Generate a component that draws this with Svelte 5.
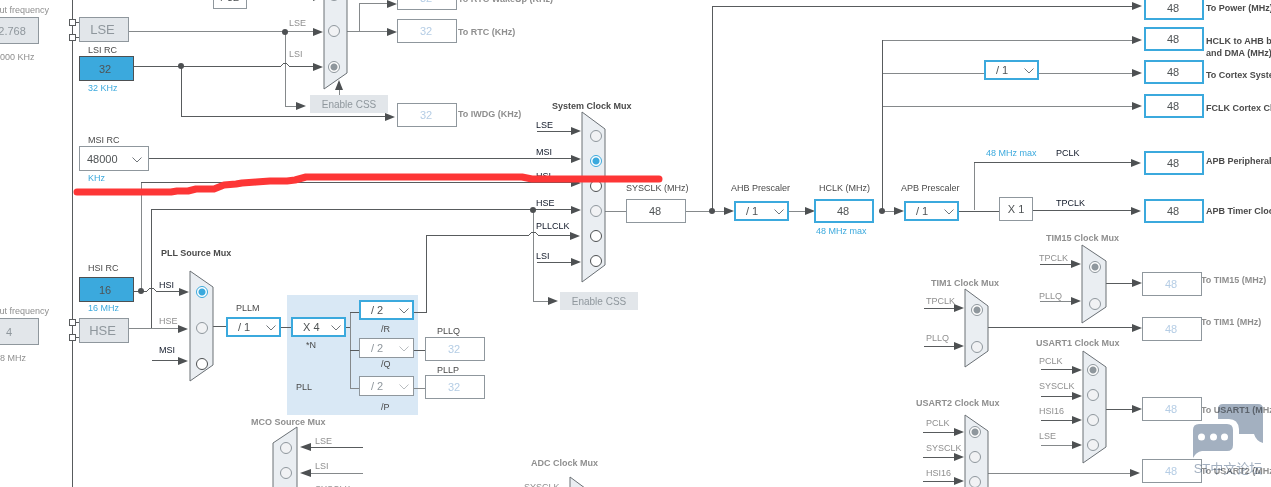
<script>
  const at = (x, y) => `left:${x}px;top:${y}px`;

  // Wire paths of the clock tree
  const wires = [
    'M72 -1V600',
    'M76 22H79M76 37H79M76 322H79M76 337H79',
    'M134 66H281Q285 60 289 66H315',
    'M181 66V116H387',
    'M149 158H573',
    'M134 291H147Q151 285 156 291H181',
    'M151 328V209H573',
    'M152 360H181',
    'M141 182H573',
    'M414 312H426V235H529Q533 229 538 235H573',
    'M537 131H573M537 262H573',
    'M712 211V6H1134',
    'M882 211V40',
    'M974 162H1134',
    'M959 211H999M1033 210H1134',
    'M213 326H226M281 327H291M346 327H350M350 312H359M350 350H359M414 350H425',
    'M303 447H363',
    'M924 308H957M924 346H957',
    'M988 327H1134',
    'M1040 264H1074M1106 283H1134',
    'M1041 369H1074M1041 396H1074M1041 420H1074M1106 409H1134',
    'M923 432H957M923 457H957M923 481H957'
  ];
  const softWires = [
    'M129 31H315M285 32V106H299',
    'M347 31H389M359 31V3H389',
    'M339 95V88',
    'M141 291V182',
    'M129 328H181',
    'M533 209V301H550',
    'M605 211H626M686 211H726M789 211H806M882 211H896',
    'M882 40H1134M882 73H984M1039 73H1134M882 106H1134',
    'M974 210V162',
    'M350 312V388H359M414 388H425',
    'M303 473H363',
    'M1040 301H1074M1041 445H1074',
    'M988 473H1134'
  ];
  const arrows = [
    [323, -3], [323, 32], [323, 67], [306, 106], [395, 117], [397, 32], [397, 4],
    [581, 131], [581, 159], [581, 183], [581, 210], [580, 236], [581, 262], [558, 301],
    [734, 211], [815, 211], [904, 211],
    [1142, 6], [1142, 40], [1142, 73], [1142, 106], [1141, 163], [1141, 211],
    [189, 292], [188, 329], [188, 361],
    [964, 308], [964, 346], [1081, 264], [1081, 301], [1142, 283], [1142, 328],
    [1082, 370], [1082, 396], [1082, 420], [1082, 445], [1142, 409],
    [964, 432], [964, 457], [964, 481], [1140, 473]
  ];
  const dots = [[285, 32], [181, 66], [141, 291], [533, 210], [712, 211], [882, 211]];
  const muxShapes = [
    '324,-20 347,-4 347,73 324,89',
    '582,112 605,129 605,265 582,282',
    '190,271 213,287 213,365 190,381',
    '965,289 988,306 988,351 965,367',
    '1082,245 1106,261 1106,307 1082,323',
    '1083,351 1106,367 1106,447 1083,463',
    '965,415 988,431 988,510 965,526',
    '297,427 273,443 273,520 297,536',
    '570,477 593,494 593,540 570,556'
  ];
  const pins = [[69, 19], [69, 34], [69, 319], [69, 334]];

  const muxes = [
    { name: 'RTC Clock Mux', x: 334, items: [['HSE_RTC', -5, 'off'], ['LSE', 31, 'off'], ['LSI', 67, 'off', true]] },
    { name: 'System Clock Mux', x: 596, items: [['LSE', 136, 'off'], ['MSI', 161, 'on', true], ['HSI', 186, 'on'], ['HSE', 211, 'off'], ['PLLCLK', 236, 'on'], ['LSI', 261, 'on']] },
    { name: 'PLL Source Mux', x: 202, items: [['HSI', 292, 'on', true], ['HSE', 328, 'off'], ['MSI', 364, 'on']] },
    { name: 'TIM1 Clock Mux', x: 977, items: [['TPCLK', 310, 'off', true], ['PLLQ', 347, 'off']] },
    { name: 'TIM15 Clock Mux', x: 1095, items: [['TPCLK', 267, 'off', true], ['PLLQ', 304, 'off']] },
    { name: 'USART1 Clock Mux', x: 1093, items: [['PCLK', 370, 'off', true], ['SYSCLK', 395, 'off'], ['HSI16', 420, 'off'], ['LSE', 445, 'off']] },
    { name: 'USART2 Clock Mux', x: 975, items: [['PCLK', 432, 'off', true], ['SYSCLK', 457, 'off'], ['HSI16', 482, 'off']] },
    { name: 'MCO Source Mux', x: 286, items: [['LSE', 448, 'off'], ['LSI', 473, 'off']] }
  ];

  const fields = [
    [-21, 17, 'source', '32.768', 'LSE input frequency'],
    [-21, 318, 'source', '4', 'HSE input frequency'],
    [397, -14, 'off', '32', 'To RTC WakeUp (KHz)'],
    [397, 19, 'off', '32', 'To RTC (KHz)'],
    [397, 103, 'off', '32', 'To IWDG (KHz)'],
    [626, 199, 'plain', '48', 'SYSCLK (MHz)'],
    [814, 199, 'live', '48', 'HCLK (MHz)'],
    [1144, -4, 'live', '48', 'To Power (MHz)'],
    [1144, 27, 'live', '48', 'HCLK to AHB bus (MHz)'],
    [1144, 60, 'live', '48', 'To Cortex System timer (MHz)'],
    [1144, 94, 'live', '48', 'FCLK Cortex clock (MHz)'],
    [1144, 151, 'live', '48', 'APB Peripheral clocks (MHz)'],
    [1144, 199, 'live', '48', 'APB Timer Clocks (MHz)'],
    [1142, 272, 'off', '48', 'To TIM15 (MHz)'],
    [1142, 317, 'off', '48', 'To TIM1 (MHz)'],
    [1142, 397, 'off', '48', 'To USART1 (MHz)'],
    [1142, 459, 'off', '48', 'To USART2 (MHz)'],
    [425, 337, 'off', '32', 'PLLQ'],
    [425, 375, 'off', '32', 'PLLP']
  ];

  const selects = [
    [79, 146, 'range', '48000', 'MSI RC'],
    [984, 60, 'live', '/ 1', 'Cortex prescaler'],
    [734, 201, 'live', '/ 1', 'AHB Prescaler'],
    [904, 201, 'live', '/ 1', 'APB Prescaler'],
    [226, 317, 'live', '/ 1', 'PLLM'],
    [291, 317, 'live', 'X 4', 'PLL multiplier N'],
    [359, 300, 'live', '/ 2', 'PLL divider R'],
    [359, 338, 'off', '/ 2', 'PLL divider Q'],
    [359, 376, 'off', '/ 2', 'PLL divider P']
  ];

  const blocks = [
    [79, 56, 'rc', '32'], [79, 277, 'rc', '16'],
    [213, -15, 'factor', '/ 32'], [999, 197, 'factor', 'X 1']
  ];
  const buttons = [
    [79, 17, 'osc', 'LSE'], [79, 318, 'osc', 'HSE'],
    [310, 95, 'css', 'Enable CSS'], [560, 292, 'css', 'Enable CSS']
  ];

  // x, vertical centre, style, text
  const labels = [
    [-13, 10, 'muted', 'Input frequency'], [-13, 57, 'muted', '0-1000 KHz'],
    [-13, 311, 'muted', 'Input frequency'], [-13, 358, 'muted', '4-48 MHz'],
    [88, 50, 'dark', 'LSI RC'], [88, 88, 'blue', '32 KHz'],
    [88, 140, 'dark', 'MSI RC'], [88, 178, 'blue', 'KHz'],
    [88, 268, 'dark', 'HSI RC'], [88, 308, 'blue', '16 MHz'],
    [289, 23, 'muted', 'LSE'], [289, 54, 'muted', 'LSI'],
    [458, -1, 'muted bold', 'To RTC WakeUp (KHz)'], [458, 32, 'muted bold', 'To RTC (KHz)'],
    [458, 114, 'muted bold', 'To IWDG (KHz)'],
    [552, 106, 'dark bold', 'System Clock Mux'],
    [536, 125, 'ink', 'LSE'], [536, 152, 'ink', 'MSI'], [536, 176, 'ink', 'HSI'],
    [536, 203, 'ink', 'HSE'], [536, 226, 'ink', 'PLLCLK'], [536, 256, 'ink', 'LSI'],
    [626, 188, 'dark', 'SYSCLK (MHz)'], [731, 188, 'dark', 'AHB Prescaler'],
    [819, 188, 'dark', 'HCLK (MHz)'], [901, 188, 'dark', 'APB Prescaler'],
    [816, 231, 'blue', '48 MHz max'], [986, 153, 'blue', '48 MHz max'],
    [1056, 153, 'ink', 'PCLK'], [1056, 203, 'ink', 'TPCLK'],
    [1206, 8, 'dark bold', 'To Power (MHz)'],
    [1206, 41, 'dark bold', 'HCLK to AHB bus, core,'], [1206, 53, 'dark bold', 'and DMA (MHz)'],
    [1206, 75, 'dark bold', 'To Cortex System timer (MHz)'],
    [1206, 108, 'dark bold', 'FCLK Cortex Clock (MHz)'],
    [1206, 161, 'dark bold', 'APB Peripheral Clocks (MHz)'],
    [1206, 211, 'dark bold', 'APB Timer Clocks (MHz)'],
    [1046, 238, 'muted bold', 'TIM15 Clock Mux'],
    [1039, 258, 'muted', 'TPCLK'], [1039, 296, 'muted', 'PLLQ'],
    [1201, 280, 'muted bold', 'To TIM15 (MHz)'], [1201, 322, 'muted bold', 'To TIM1 (MHz)'],
    [931, 283, 'muted bold', 'TIM1 Clock Mux'],
    [926, 301, 'muted', 'TPCLK'], [926, 338, 'muted', 'PLLQ'],
    [1036, 343, 'muted bold', 'USART1 Clock Mux'],
    [1039, 361, 'muted', 'PCLK'], [1039, 386, 'muted', 'SYSCLK'],
    [1039, 411, 'muted', 'HSI16'], [1039, 436, 'muted', 'LSE'],
    [1201, 410, 'muted bold', 'To USART1 (MHz)'],
    [916, 403, 'muted bold', 'USART2 Clock Mux'],
    [926, 423, 'muted', 'PCLK'], [926, 448, 'muted', 'SYSCLK'], [926, 473, 'muted', 'HSI16'],
    [1201, 471, 'muted bold', 'To USART2 (MHz)'],
    [161, 253, 'dark bold', 'PLL Source Mux'],
    [159, 285, 'ink', 'HSI'], [159, 321, 'muted', 'HSE'], [159, 350, 'ink', 'MSI'],
    [236, 308, 'dark', 'PLLM'], [306, 345, 'dark', '*N'], [296, 387, 'dark', 'PLL'],
    [381, 329, 'dark', '/R'], [381, 364, 'dark', '/Q'], [381, 407, 'dark', '/P'],
    [437, 331, 'dark', 'PLLQ'], [437, 370, 'dark', 'PLLP'],
    [251, 422, 'muted bold', 'MCO Source Mux'],
    [315, 441, 'muted', 'LSE'], [315, 466, 'muted', 'LSI'], [315, 489, 'muted', 'SYSCLK'],
    [531, 463, 'muted bold', 'ADC Clock Mux'], [524, 487, 'muted', 'SYSCLK']
  ];
</script>

<main class="canvas">
  <div class="pll" style={at(287, 295)}></div>

  <svg class="layer" aria-hidden="true">
    {#each softWires as d}<path class="wire soft" {d} />{/each}
    {#each wires as d}<path class="wire" {d} />{/each}
    {#each muxShapes as points}<polygon class="mux" {points} />{/each}
    {#each arrows as [x, y]}<path class="solid" d="M{x} {y}l-10 -4v8z" />{/each}
    <path class="solid" d="M339 80l-4 10h8zM300 447l11 -4v8zM300 473l11 -4v8z" />
    {#each dots as [x, y]}<circle class="solid" cx={x} cy={y} r="3" />{/each}
    {#each pins as [x, y]}<rect class="pin" {x} {y} width="6" height="6" />{/each}
  </svg>

  {#each labels as [x, y, kind, text]}
    <span class="label {kind}" style={at(x, y - 6)}>{text}</span>
  {/each}

  {#each blocks as [x, y, kind, text]}
    <div class="block {kind}" style={at(x, y)}>{text}</div>
  {/each}

  {#each buttons as [x, y, kind, text]}
    <button class={kind} style={at(x, y)} disabled>{text}</button>
  {/each}

  {#each fields as [x, y, kind, value, name]}
    <input class="field {kind}" style={at(x, y)} type="text" {value} aria-label={name} disabled={kind === 'off' || kind === 'source'} />
  {/each}

  {#each selects as [x, y, kind, value, name]}
    <div class="select {kind}" style={at(x, y)}>
      <select aria-label={name} disabled={kind === 'off'}><option>{value}</option></select>
      <svg viewBox="0 0 10 6" aria-hidden="true"><path d="M0.5 0.5L5 5L9.5 0.5" /></svg>
    </div>
  {/each}

  {#each muxes as mux}
    {#each mux.items as [name, y, kind, checked]}
      <input class="radio {kind}" style={at(mux.x - 6, y - 6)} type="radio" name={mux.name} value={name} aria-label="{mux.name}: {name}" checked={!!checked} disabled={kind === 'off'} />
    {/each}
  {/each}

  <div class="watermark" style={at(1192, 404)}>
    <svg viewBox="0 0 72 56" aria-hidden="true">
      <path d="M26 15V5Q26 0 31 0H66Q71 0 71 5V39Q64 37 62 30H47V25Q46 15 37 15Z" />
      <path fill-rule="evenodd" d="M1 54V26Q1 20 7 20H35Q41 20 41 26V41Q41 47 35 47H10Q4 48 1 54ZM6 33a3.4 3.4 0 1 0 7 0a3.4 3.4 0 1 0 -7 0M18 33a3.4 3.4 0 1 0 7 0a3.4 3.4 0 1 0 -7 0M29 33a3.4 3.4 0 1 0 7 0a3.4 3.4 0 1 0 -7 0" />
    </svg>
    <span>ST中文论坛</span>
  </div>

  <svg class="layer marker" aria-hidden="true">
    <path d="M77 192H171L177 191H188L196 189H214L224 185L236 184L242 183L256 182L270 181H287L295 180L306 177H522L532 179H659" />
  </svg>
</main>

<style>
  :global(body) {
    background: #fff;
  }
  .canvas {
    position: relative;
    min-height: 100vh;
    overflow: hidden;
    font-family: 'Liberation Sans', Arial, sans-serif;
    font-size: 11px;
    color: #4f5355;
  }
  .canvas > div,
  .canvas > span,
  .canvas > button,
  .canvas > input {
    position: absolute;
    box-sizing: border-box;
    margin: 0;
  }
  .layer {
    position: absolute;
    inset: 0;
    width: 100%;
    height: 100%;
    pointer-events: none;
  }
  .wire {
    fill: none;
    stroke: #585b5d;
    stroke-width: 1;
    shape-rendering: crispEdges;
  }
  .soft {
    stroke: #85898b;
  }
  .solid {
    fill: #4d5052;
  }
  .mux {
    fill: #eaeef2;
    stroke: #6a7075;
  }
  .pin {
    fill: #fff;
    stroke: #585b5d;
    shape-rendering: crispEdges;
  }
  .marker path {
    fill: none;
    stroke: #fd3636;
    stroke-width: 7;
    stroke-linecap: round;
    stroke-linejoin: round;
  }
  .pll {
    width: 131px;
    height: 120px;
    background: #d9e8f5;
  }

  .label {
    font-size: 9px;
    line-height: 12px;
    white-space: nowrap;
  }
  .dark { color: #4a4a4a; }
  .muted { color: #8f8f8f; }
  .blue { color: #3ba9dd; }
  .ink { color: #101828; }
  .bold { font-weight: bold; }

  .block {
    display: flex;
    align-items: center;
    justify-content: center;
    border: 1px solid #8f979d;
  }
  .rc {
    width: 55px;
    height: 25px;
    padding-right: 3px;
    border-color: #4d5052;
    background: #3ba9dd;
  }
  .factor {
    width: 34px;
    height: 24px;
    background: #fff;
  }

  button {
    padding: 0;
    border: 0;
    background: #e2e6ea;
    color: #8f979d;
    font: 11px 'Liberation Sans', Arial, sans-serif;
  }
  .osc {
    width: 50px;
    height: 25px;
    padding-right: 3px;
    border: 1px solid #8f979d;
    font-size: 13px;
  }
  .css {
    width: 78px;
    height: 18px;
    font-size: 10px;
  }

  .field {
    width: 60px;
    height: 24px;
    padding: 0 2px 0 0;
    border: 1px solid #8f979d;
    background: #fff;
    color: #4f5355;
    font: 11px 'Liberation Sans', Arial, sans-serif;
    text-align: center;
  }
  .field.live {
    border: 2px solid #3ba9dd;
  }
  .field.off {
    color: #b5cde5;
  }
  .field.source {
    height: 27px;
    padding: 0;
    background: #e2e6ea;
    color: #8f979d;
  }

  .select {
    width: 55px;
    height: 20px;
  }
  select {
    display: block;
    box-sizing: border-box;
    width: 100%;
    height: 100%;
    margin: 0;
    padding: 0 0 0 10px;
    border: 2px solid #3ba9dd;
    border-radius: 0;
    appearance: none;
    background: #fff;
    color: #4f5355;
    font: 11px 'Liberation Sans', Arial, sans-serif;
    opacity: 1;
  }
  .select.off select {
    padding-left: 11px;
    border: 1px solid #8f979d;
    color: #8f979d;
  }
  .select svg {
    position: absolute;
    right: 5px;
    top: 50%;
    width: 10px;
    height: 6px;
    margin-top: -2px;
    fill: none;
    stroke: #70757a;
    pointer-events: none;
  }
  .select.off svg {
    stroke: #b9bdc0;
  }
  .select.range {
    width: 70px;
    height: 25px;
  }
  .select.range select {
    padding-left: 7px;
    border: 1px solid #8f979d;
  }
  .select.range svg {
    right: 7px;
  }

  .radio {
    width: 12px;
    height: 12px;
    border: 1px solid #8f979d;
    border-radius: 50%;
    appearance: none;
    background: #f1f2f4;
  }
  .radio.on {
    border-color: #4d5052;
    background: #fff;
  }
  .radio:checked {
    background: radial-gradient(circle, #8f979d 3px, #fff 4px);
  }
  .radio.on:checked {
    border-color: #3ba9dd;
    background: radial-gradient(circle, #3ba9dd 3px, #fff 4px);
  }

  .watermark {
    width: 72px;
    color: #a3b0c0;
    mix-blend-mode: multiply;
    font: 13px/18px 'Liberation Sans', 'Noto Sans CJK SC', sans-serif;
    text-align: center;
    white-space: nowrap;
  }
  .watermark svg {
    display: block;
    width: 72px;
    height: 56px;
    fill: #a3b0c0;
  }
</style>
